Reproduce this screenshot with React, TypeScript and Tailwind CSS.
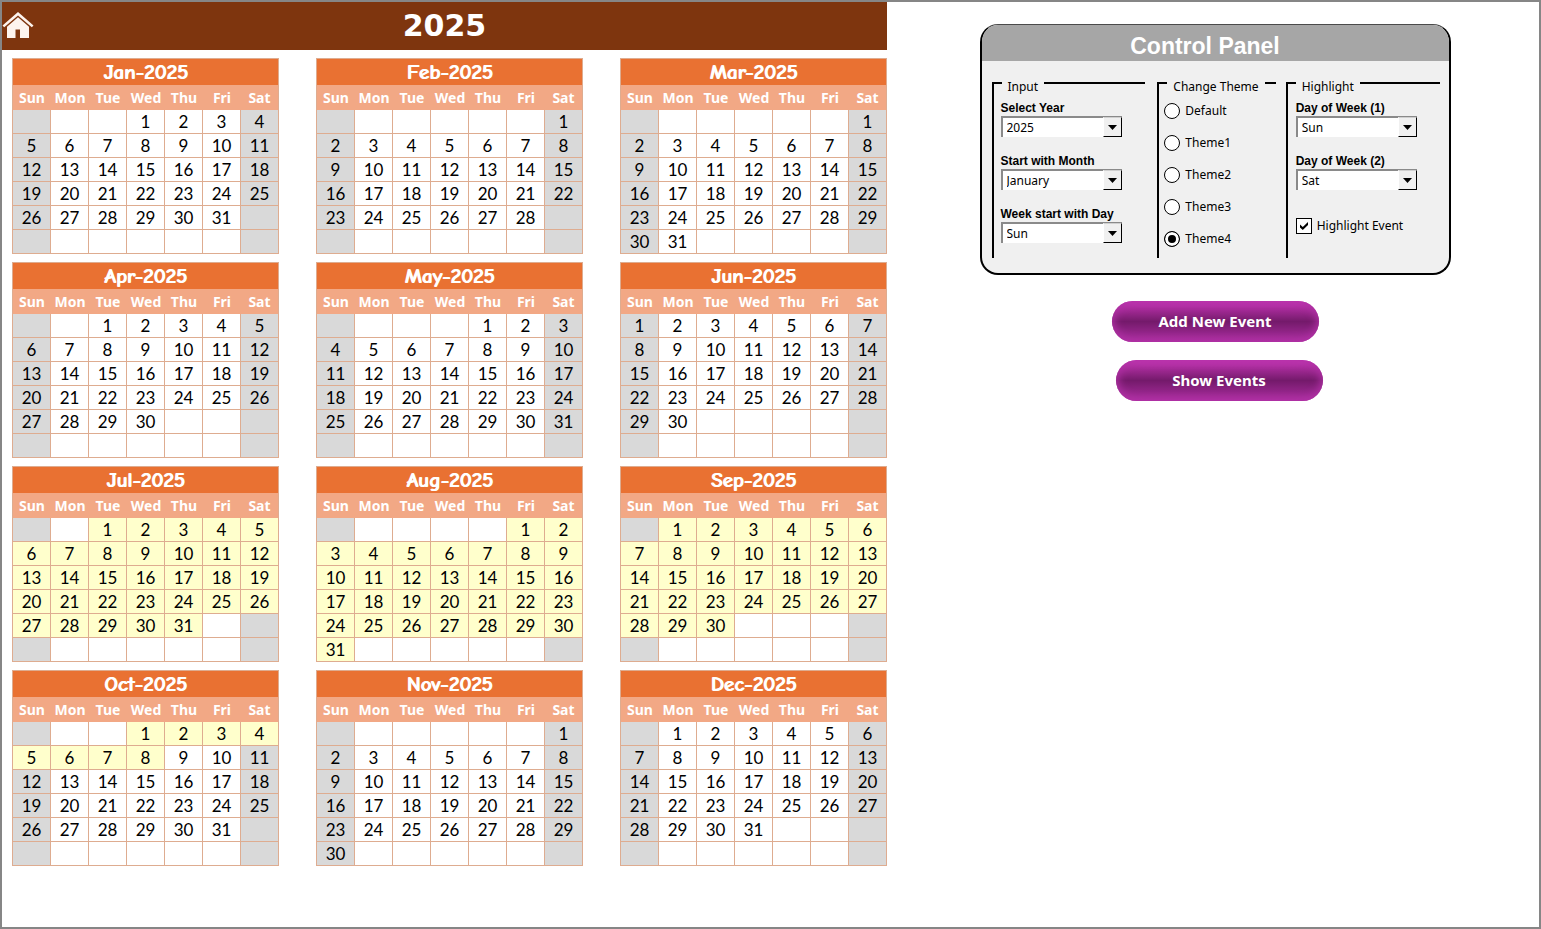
import { useState } from "react";
import type { ReactNode } from "react";

const MONTHS = ["January", "February", "March", "April", "May", "June", "July", "August", "September", "October", "November", "December"];
const DAYS = ["Sun", "Mon", "Tue", "Wed", "Thu", "Fri", "Sat"];
const YEARS = ["2023", "2024", "2025", "2026", "2027"];

const THEMES = [
  { name: "Default", banner: "bg-[#0f3a5f]", title: "bg-[#2f75b5]", week: "bg-[#8db4dd]", line: "border-[#a9c4e0]" },
  { name: "Theme1", banner: "bg-[#275317]", title: "bg-[#4ea72e]", week: "bg-[#97cf82]", line: "border-[#a9d09a]" },
  { name: "Theme2", banner: "bg-[#3b3b3b]", title: "bg-[#7f7f7f]", week: "bg-[#b2b2b2]", line: "border-[#bfbfbf]" },
  { name: "Theme3", banner: "bg-[#501549]", title: "bg-[#a02b93]", week: "bg-[#d086c8]", line: "border-[#d9a3d2]" },
  { name: "Theme4", banner: "bg-[#7e350e]", title: "bg-[#e97132]", week: "bg-[#f2a885]", line: "border-[#deac90]" },
];
type Theme = (typeof THEMES)[number];

const EVENT = { from: new Date(2025, 6, 1), to: new Date(2025, 9, 8) };

type Settings = {
  theme: Theme;
  weekStart: number;
  marked: number[];
  showEvents: boolean;
};

function MonthTable({ year, month, settings }: { year: number; month: number; settings: Settings }) {
  const { theme, weekStart, marked, showEvents } = settings;
  const offset = (new Date(year, month, 1).getDay() - weekStart + 7) % 7;
  const length = new Date(year, month + 1, 0).getDate();

  return (
    <table className={`w-full table-fixed border-separate border-spacing-0 border-t border-l text-center ${theme.line}`}>
      <thead>
        <tr>
          <th
            colSpan={7}
            className={`h-[26px] border-r p-0 font-['Comic_Sans_MS','Comic_Neue',Lato,sans-serif] text-[21px] leading-[24px] font-bold text-white [text-shadow:1px_0_0_#fff] ${theme.title} ${theme.line}`}
          >
            {MONTHS[month].slice(0, 3)}-{year}
          </th>
        </tr>
        <tr>
          {DAYS.map((_, i) => (
            <th
              key={i}
              className={`h-[25px] p-0 font-['Noto_Sans',sans-serif] text-[14px] leading-[24px] font-bold text-white ${theme.week} ${i === 6 ? "border-r" : ""} ${theme.line}`}
            >
              {DAYS[(i + weekStart) % 7]}
            </th>
          ))}
        </tr>
      </thead>
      <tbody>
        {[0, 1, 2, 3, 4, 5].map((row) => (
          <tr key={row}>
            {DAYS.map((_, col) => {
              const day = row * 7 + col - offset + 1;
              const inMonth = day >= 1 && day <= length;
              const date = new Date(year, month, day);
              const hasEvent = showEvents && inMonth && date >= EVENT.from && date <= EVENT.to;
              const shade = hasEvent ? "bg-[#ffffcc]" : marked.includes((col + weekStart) % 7) ? "bg-[#d9d9d9]" : "bg-white";
              return (
                <td key={col} className={`h-[24px] border-r border-b p-0 text-[17px] leading-[23px] text-black ${shade} ${theme.line}`}>
                  {inMonth ? day : ""}
                </td>
              );
            })}
          </tr>
        ))}
      </tbody>
    </table>
  );
}

function Picker({ id, label, value, options, onChange }: { id: string; label: string; value: string; options: string[]; onChange: (v: string) => void }) {
  return (
    <div className="w-[121px]">
      <label htmlFor={id} className="block h-4 font-['Liberation_Sans',sans-serif] text-[12px] leading-4 font-bold whitespace-nowrap">
        {label}
      </label>
      <div className="relative">
        <select
          id={id}
          value={value}
          onChange={(e) => onChange(e.target.value)}
          className="block h-[21px] w-full appearance-none rounded-none border-t-2 border-l-2 border-[#8a8a8a] bg-white pl-1 text-[12px] leading-4"
        >
          {options.map((o) => (
            <option key={o}>{o}</option>
          ))}
        </select>
        <span className="pointer-events-none absolute top-[1px] right-0 flex h-5 w-[19px] items-center justify-center border border-t-[#d0d0d0] border-r-black border-b-black border-l-white bg-[#f0f0f0]">
          <svg width="9" height="5" viewBox="0 0 9 5" aria-hidden="true">
            <path d="M0 0h9L4.500 5z" fill="#000" />
          </svg>
        </span>
      </div>
    </div>
  );
}

function Group({ title, className, children }: { title: string; className: string; children: ReactNode }) {
  return (
    <fieldset className={`h-[188px] min-w-0 border-t-2 border-l-2 border-black ${className}`}>
      <legend className="ml-2 px-[6px] pt-[9px] text-[12px] leading-4 whitespace-nowrap">{title}</legend>
      {children}
    </fieldset>
  );
}

function PillButton({ children, className }: { children: ReactNode; className: string }) {
  return (
    <button
      type="button"
      className={`h-[41px] w-[207px] rounded-full bg-linear-to-b from-[#c938b9] via-[#741a6b] to-[#ad2fa2] font-['Noto_Sans',sans-serif] text-[15px] font-bold text-white shadow-[inset_0_0_9px_2px_#b030a4] ${className}`}
    >
      {children}
    </button>
  );
}

export default function App() {
  const [year, setYear] = useState("2025");
  const [startMonth, setStartMonth] = useState("January");
  const [weekStart, setWeekStart] = useState("Sun");
  const [first, setFirst] = useState("Sun");
  const [second, setSecond] = useState("Sat");
  const [themeIndex, setThemeIndex] = useState(4);
  const [showEvents, setShowEvents] = useState(true);

  const theme = THEMES[themeIndex];
  const settings: Settings = {
    theme,
    weekStart: DAYS.indexOf(weekStart),
    marked: [DAYS.indexOf(first), DAYS.indexOf(second)],
    showEvents,
  };

  return (
    <div className="flex min-h-screen border-2 border-[#868686] bg-white font-[Lato,sans-serif] text-black">
      <main className="min-w-0 flex-[885]">
        <header className={`grid h-12 grid-cols-[32px_1fr_32px] items-center ${theme.banner}`}>
          <a href="#home" aria-label="Home">
            <svg width="32" height="28" viewBox="0 0 32 28" aria-hidden="true" fill="#fdf4ee">
              <path d="M16 0L0.500 13.500L2.200 15.300L16 3.400L29.800 15.300L31.500 13.500Z" />
              <path d="M16 5.200L5 14.700V26H13.500V17.500H18V26H27V14.700Z" />
            </svg>
          </a>
          <h1 className="text-center font-['Arial_Rounded_MT_Bold','DejaVu_Sans',sans-serif] text-[30px] leading-none font-bold text-white">{year}</h1>
        </header>
        <div className="grid grid-cols-3 gap-x-[37px] gap-y-2 pt-2 pb-8 pl-[10px]">
          {MONTHS.map((_, i) => {
            const d = new Date(Number(year), MONTHS.indexOf(startMonth) + i, 1);
            return <MonthTable key={i} year={d.getFullYear()} month={d.getMonth()} settings={settings} />;
          })}
        </div>
      </main>

      <aside className="min-w-0 flex-[652]">
        <div className="flex flex-col items-center pt-[22px] pl-1">
          <section className="w-full max-w-[471px] overflow-hidden rounded-[18px] border-2 border-t border-black border-t-[#4a4a4a] bg-[#f0f0f0] font-['Noto_Sans',sans-serif]">
            <h2 className="h-9 bg-[#a6a6a6] pr-5 text-center font-['Arial_Rounded_MT_Bold','Liberation_Sans',sans-serif] text-[23px] leading-[42px] font-bold text-white">
              Control Panel
            </h2>
            <div className="flex items-start pt-[9px] pr-[9px] pb-[15px] pl-[10px]">
              <Group title="Input" className="flex-[154]">
                <div className="flex flex-col gap-4 pt-[5px] pl-[7px]">
                  <Picker id="year" label="Select Year" value={year} options={YEARS} onChange={setYear} />
                  <Picker id="month" label="Start with Month" value={startMonth} options={MONTHS} onChange={setStartMonth} />
                  <Picker id="week" label="Week start with Day" value={weekStart} options={DAYS} onChange={setWeekStart} />
                </div>
              </Group>
              <Group title="Change Theme" className="ml-3 flex-[118]">
                <div className="flex flex-col gap-4 pt-2 pl-[5px]">
                  {THEMES.map((t, i) => (
                    <label key={t.name} className="flex h-4 items-center gap-[5px] text-[12px] leading-4">
                      <input
                        type="radio"
                        name="theme"
                        checked={i === themeIndex}
                        onChange={() => setThemeIndex(i)}
                        className="size-4 appearance-none rounded-full border border-black bg-white checked:bg-black checked:shadow-[inset_0_0_0_3px_#fff]"
                      />
                      {t.name}
                    </label>
                  ))}
                </div>
              </Group>
              <Group title="Highlight" className="ml-[10px] flex-[154]">
                <div className="flex flex-col gap-4 pt-[5px] pl-2">
                  <Picker id="day1" label="Day of Week (1)" value={first} options={DAYS} onChange={setFirst} />
                  <Picker id="day2" label="Day of Week (2)" value={second} options={DAYS} onChange={setSecond} />
                  <label className="mt-3 flex h-4 items-center gap-[5px] text-[12px] leading-4 whitespace-nowrap">
                    <span className="grid size-4 place-items-center">
                      <input
                        type="checkbox"
                        checked={showEvents}
                        onChange={(e) => setShowEvents(e.target.checked)}
                        className="peer col-start-1 row-start-1 size-4 appearance-none border border-black bg-white"
                      />
                      <svg width="8" height="8" viewBox="0 0 8 8" className="pointer-events-none invisible col-start-1 row-start-1 peer-checked:visible" aria-hidden="true">
                        <path d="M0 2.500L2.800 5L8 0V3L2.800 8L0 5.500Z" fill="#000" />
                      </svg>
                    </span>
                    Highlight Event
                  </label>
                </div>
              </Group>
            </div>
          </section>
          <PillButton className="mt-[26px]">Add New Event</PillButton>
          <PillButton className="mt-[18px] ml-2">Show Events</PillButton>
        </div>
      </aside>
    </div>
  );
}
